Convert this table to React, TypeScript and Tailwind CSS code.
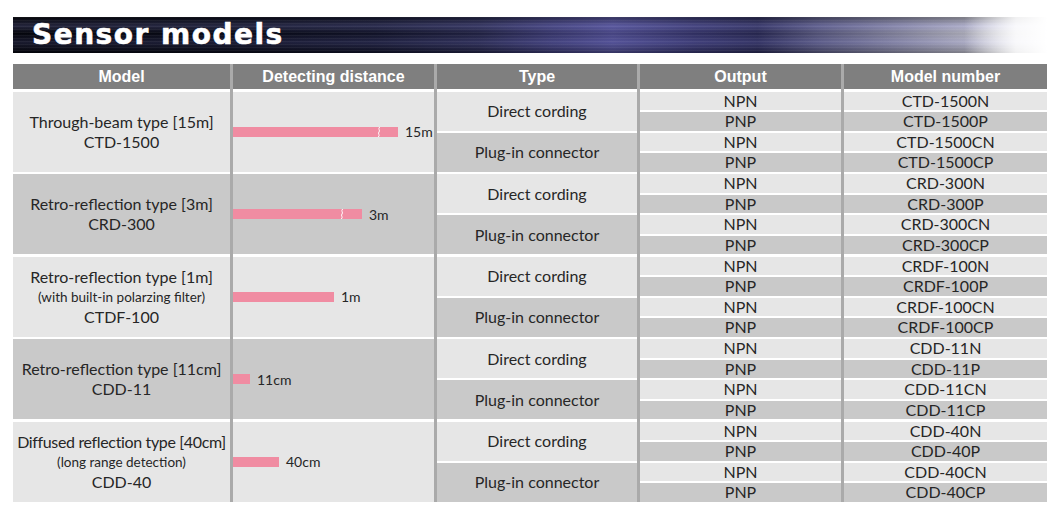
import React from "react";

type Line = { t: string; small?: boolean; tight?: boolean };
type Group = {
  lines: Line[];
  bar: number;
  brk?: number;
  label: string;
  prefix: string;
};

const groups: Group[] = [
  {
    lines: [{ t: "Through-beam type [15m]" }, { t: "CTD-1500" }],
    bar: 165,
    brk: 146,
    label: "15m",
    prefix: "CTD-1500",
  },
  {
    lines: [{ t: "Retro-reflection type [3m]" }, { t: "CRD-300" }],
    bar: 129,
    brk: 109,
    label: "3m",
    prefix: "CRD-300",
  },
  {
    lines: [
      { t: "Retro-reflection type [1m]" },
      { t: "(with built-in polarzing filter)", small: true },
      { t: "CTDF-100" },
    ],
    bar: 101,
    label: "1m",
    prefix: "CRDF-100",
  },
  {
    lines: [{ t: "Retro-reflection type [11cm]" }, { t: "CDD-11" }],
    bar: 17,
    label: "11cm",
    prefix: "CDD-11",
  },
  {
    lines: [
      { t: "Diffused reflection type [40cm]", tight: true },
      { t: "(long range detection)", small: true },
      { t: "CDD-40" },
    ],
    bar: 46,
    label: "40cm",
    prefix: "CDD-40",
  },
];

const LIGHT = "bg-[#e6e6e6]";
const DARK = "bg-[#c9c9c9]";

function Break({ left }: { left: number }) {
  return (
    <svg
      className="absolute top-0"
      style={{ left: left - 3 }}
      width="6"
      height="10"
      viewBox="0 0 6 10"
    >
      <path
        d="M3.6 0 C1.6 2.2, 4.6 3.6, 3 5 C1.4 6.4, 4.4 7.8, 2.4 10"
        stroke="#ffffff"
        strokeWidth="1"
        fill="none"
      />
    </svg>
  );
}

export default function App() {
  const body = "font-['Lato',sans-serif] text-[#262626]";
  return (
    <div className="w-[1060px] h-[531px] bg-white overflow-hidden pt-[17px] px-[13px]">
      {/* Banner */}
      <div className="h-[36px] w-[1034px] flex items-center pl-[19px] [background-image:linear-gradient(90deg,rgba(255,255,255,0)_0%,rgba(255,255,255,0)_92%,rgba(255,255,255,0.85)_97%,#ffffff_100%),repeating-linear-gradient(180deg,rgba(255,255,255,0.05)_0px,rgba(255,255,255,0.05)_1px,rgba(0,0,0,0)_1px,rgba(0,0,0,0)_3px),linear-gradient(180deg,rgba(0,0,0,0.35)_0%,rgba(150,150,230,0.22)_25%,rgba(0,0,0,0.1)_45%,rgba(120,120,200,0.18)_70%,rgba(0,0,0,0.3)_100%),linear-gradient(90deg,#05060d_0%,#090b18_22%,#12142a_35%,#232446_45%,#3a3970_52%,#4d4b8e_58%,#35346a_66%,#2a2a55_72%,#5a5a80_78%,#8d8da6_86%,#b5b5c3_92%,#e8e8ee_97%)]">
        <span className="font-['DejaVu_Sans',sans-serif] font-bold text-white text-[28px] leading-none tracking-[1.5px] [-webkit-text-stroke:0.6px_#ffffff]">
          Sensor models
        </span>
      </div>

      {/* Table */}
      <div className="mt-[11px] grid grid-cols-[217px_3px_201px_3px_200px_3px_201px_3px_203px] grid-rows-[25px_repeat(5,80px)] gap-y-[2.5px]">
        <div className="col-start-2 row-start-1 row-span-6 bg-[#aaaaaa]" />
        <div className="col-start-4 row-start-1 row-span-6 bg-[#aaaaaa]" />
        <div className="col-start-6 row-start-1 row-span-6 bg-[#aaaaaa]" />
        <div className="col-start-8 row-start-1 row-span-6 bg-[#aaaaaa]" />

        {["Model", "Detecting distance", "Type", "Output", "Model number"].map(
          (h) => (
            <div
              key={h}
              className="bg-[#7f7f7f] flex items-center justify-center font-['Liberation_Sans',sans-serif] font-bold text-white text-[16px]"
            >
              {h}
            </div>
          )
        )}

        {groups.map((g, i) => {
          const bg = i % 2 === 0 ? LIGHT : DARK;
          return (
            <React.Fragment key={g.prefix}>
              <div
                className={`${bg} ${body} flex flex-col items-center justify-center whitespace-nowrap`}
              >
                {g.lines.map((l) => (
                  <div
                    key={l.t}
                    className={
                      l.small
                        ? "text-[13.5px] leading-[20px]"
                        : l.tight
                        ? "text-[16px] leading-[20px] tracking-[-0.35px]"
                        : "text-[16px] leading-[20px]"
                    }
                  >
                    {l.t}
                  </div>
                ))}
              </div>
              <div className={`${bg} ${body} flex items-center`}>
                <div
                  className="relative h-[10px] bg-[#f08ca2]"
                  style={{ width: g.bar }}
                >
                  {g.brk !== undefined && <Break left={g.brk} />}
                </div>
                <span className="ml-[7px] text-[14px]">{g.label}</span>
              </div>
              <div className={`${body} flex flex-col gap-[2px]`}>
                <div
                  className={`${LIGHT} flex-1 flex items-center justify-center text-[16px]`}
                >
                  Direct cording
                </div>
                <div
                  className={`${DARK} flex-1 flex items-center justify-center text-[16px]`}
                >
                  Plug-in connector
                </div>
              </div>
              <div className={`${body} flex flex-col gap-[2px]`}>
                {["NPN", "PNP", "NPN", "PNP"].map((o, k) => (
                  <div
                    key={k}
                    className={`${k % 2 === 0 ? LIGHT : DARK} flex-1 flex items-center justify-center text-[16px] leading-none`}
                  >
                    {o}
                  </div>
                ))}
              </div>
              <div className={`${body} flex flex-col gap-[2px]`}>
                {["N", "P", "CN", "CP"].map((s, k) => (
                  <div
                    key={k}
                    className={`${k % 2 === 0 ? LIGHT : DARK} flex-1 flex items-center justify-center text-[16px] leading-none`}
                  >
                    {g.prefix + s}
                  </div>
                ))}
              </div>
            </React.Fragment>
          );
        })}
      </div>
    </div>
  );
}
